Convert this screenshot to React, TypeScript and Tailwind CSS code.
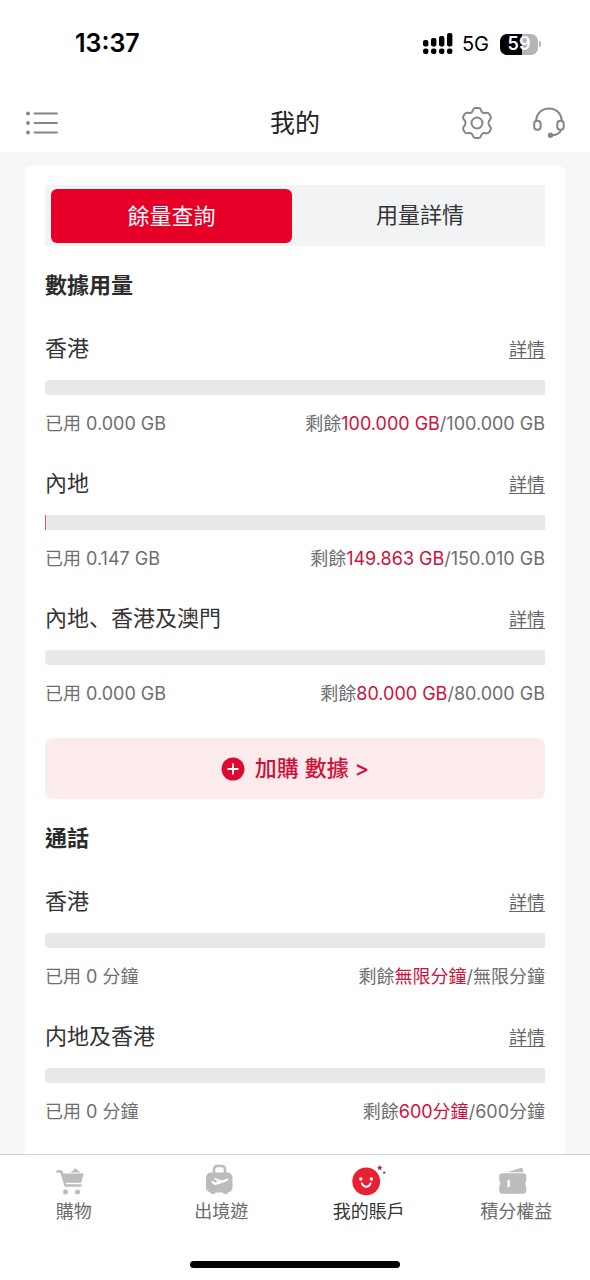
import type { ReactNode } from "react"
import clsx from "clsx"

type Usage = {
  name: string
  used: number
  total: number
  usedText: string
  leftText: string
  totalText: string
}

const dataUsage: Usage[] = [
  { name: "香港", used: 0, total: 100, usedText: "0.000 GB", leftText: "100.000 GB", totalText: "100.000 GB" },
  { name: "內地", used: 0.147, total: 150.01, usedText: "0.147 GB", leftText: "149.863 GB", totalText: "150.010 GB" },
  { name: "內地、香港及澳門", used: 0, total: 80, usedText: "0.000 GB", leftText: "80.000 GB", totalText: "80.000 GB" },
]

const voiceUsage: Usage[] = [
  { name: "香港", used: 0, total: 1, usedText: "0 分鐘", leftText: "無限分鐘", totalText: "無限分鐘" },
  { name: "内地及香港", used: 0, total: 600, usedText: "0 分鐘", leftText: "600分鐘", totalText: "600分鐘" },
]

function StatusBar() {
  return (
    <div className="flex h-[88px] items-center justify-between pl-[75px] pr-[49px] text-black">
      <span className="text-[25px] font-semibold">13:37</span>
      <div className="flex items-center">
        <svg width="30" height="22" viewBox="0 0 30 22" fill="currentColor" aria-hidden="true">
          <rect x="0" y="7" width="5.400" height="6.500" rx="2" />
          <rect x="8" y="5" width="5.400" height="8.500" rx="2" />
          <rect x="16" y="3" width="5.400" height="10.500" rx="2" />
          <rect x="24" y="0" width="5.400" height="13.500" rx="2" />
          <rect x="0" y="15.500" width="5.400" height="5.500" rx="2.200" />
          <rect x="8" y="15.500" width="5.400" height="5.500" rx="2.200" />
          <rect x="16" y="15.500" width="5.400" height="5.500" rx="2.200" />
          <rect x="24" y="15.500" width="5.400" height="5.500" rx="2.200" />
        </svg>
        <span className="mr-[11px] ml-[9px] text-xl">5G</span>
        <div className="flex h-[21px] w-[38px] items-center justify-center rounded-[7px] bg-linear-to-r from-black from-59% to-[#b5b5b5] to-59% text-lg font-semibold text-white">
          59
        </div>
        <div className="ml-px h-[6px] w-[2px] rounded-r-full bg-[#b5b5b5]" />
      </div>
    </div>
  )
}

function Header() {
  return (
    <header className="grid h-16 grid-cols-[1fr_auto_1fr] items-center px-[25px] pt-[6px] text-[#858585]">
      <button type="button" aria-label="選單" className="justify-self-start">
        <svg width="34" height="24" viewBox="0 0 34 24" fill="none" stroke="currentColor" strokeWidth="1.8" strokeLinecap="round">
          <path d="M9.500 2.500H32M9.500 12H32M9.500 21.500H32" />
          <g fill="currentColor" stroke="none">
            <circle cx="3" cy="2.500" r="1.900" />
            <circle cx="3" cy="12" r="1.900" />
            <circle cx="3" cy="21.500" r="1.900" />
          </g>
        </svg>
      </button>
      <h1 className="text-[25px] leading-8 text-[#222]">我的</h1>
      <div className="flex gap-10 justify-self-end">
        <button type="button" aria-label="設定">
          <svg width="32" height="32" viewBox="-16 -16 32 32" fill="none" stroke="currentColor" strokeWidth="2" strokeLinejoin="round">
            <path d="M-1.500-15H1.500Q3.300-15 3.900-13.200L4.500-11.800Q5.300-9.600 7.600-10L9.500-10.300Q11.400-10.500 12.300-9L13.600-6.700Q14.500-5.200 13.200-3.700L12-2.100Q10.800 0 12 2.100L13.200 3.700Q14.500 5.200 13.600 6.700L12.300 9Q11.400 10.500 9.500 10.300L7.600 10Q5.300 9.600 4.500 11.800L3.900 13.200Q3.300 15 1.500 15H-1.500Q-3.300 15-3.900 13.200L-4.500 11.800Q-5.300 9.600-7.600 10L-9.500 10.300Q-11.400 10.500-12.300 9L-13.600 6.700Q-14.500 5.200-13.200 3.700L-12 2.100Q-10.800 0-12-2.100L-13.200-3.700Q-14.500-5.200-13.600-6.700L-12.300-9Q-11.400-10.500-9.500-10.300L-7.600-10Q-5.300-9.600-4.500-11.800L-3.900-13.200Q-3.300-15-1.500-15Z" />
            <circle r="5.500" />
          </svg>
        </button>
        <button type="button" aria-label="客戶服務">
          <svg width="32" height="32" viewBox="0 0 32 32" fill="none" stroke="currentColor" strokeWidth="2" strokeLinecap="round">
            <path d="M3.200 13.500C3.600 6.300 9 1.500 16 1.500s12.300 4.800 12.700 12" />
            <rect x="1.200" y="13.800" width="6.400" height="9" rx="3" />
            <rect x="24.300" y="13.800" width="6.400" height="9" rx="3" />
            <path d="M28 23c-.8 3-5 5.400-10 5.400" />
            <circle cx="17.500" cy="28.300" r="1.700" fill="currentColor" />
          </svg>
        </button>
      </div>
    </header>
  )
}

function UsageItem({ item }: { item: Usage }) {
  return (
    <div>
      <div className="flex items-end justify-between">
        <h3 className="font-['Inter','Noto_Sans_CJK_SC',sans-serif] text-[22px] leading-8 text-[#333]" lang="zh-Hans">
          {item.name}
        </h3>
        <a href="#" className="text-lg leading-7 text-[#666] underline decoration-1 underline-offset-2">
          詳情
        </a>
      </div>
      <div
        role="progressbar"
        aria-label={item.name}
        aria-valuenow={item.used}
        aria-valuemax={item.total}
        className="mt-4 h-[15px] rounded-l-sm bg-[#e9e9e9]"
      >
        {item.used > 0 && (
          <div className="h-full min-w-px bg-[#e5526a]" style={{ width: `${(item.used / item.total) * 100}%` }} />
        )}
      </div>
      <div className="mt-[15px] flex justify-between text-lg leading-7 text-[#6e6e6e]">
        <span>已用 {item.usedText}</span>
        <span>
          剩餘<span className="text-[#d0103a]">{item.leftText}</span>/{item.totalText}
        </span>
      </div>
    </div>
  )
}

function UsageSection({ title, items }: { title: string; items: Usage[] }) {
  return (
    <section className="mt-[23px]">
      <h2 className="mb-[31px] text-[22px] leading-8 font-bold text-[#2b2b2b]">{title}</h2>
      <div className="flex flex-col gap-[29px]">
        {items.map((item) => (
          <UsageItem key={item.name} item={item} />
        ))}
      </div>
    </section>
  )
}

function NavItem({ label, active, children }: { label: string; active?: boolean; children: ReactNode }) {
  return (
    <a
      href="#"
      className={clsx("flex flex-1 flex-col items-center", active ? "text-[#333]" : "text-[#6b6b6b]")}
      aria-current={active ? "page" : undefined}
    >
      <svg width="36" height="32" viewBox="0 0 36 32" fill="#bcbcbc" aria-hidden="true">
        {children}
      </svg>
      <span className="mt-[2px] text-lg leading-7">{label}</span>
    </a>
  )
}

function BottomNav() {
  return (
    <nav className="sticky bottom-0 border-t border-[#cfcfcf] bg-white">
      <div className="flex pt-[9px]">
        <NavItem label="購物">
          <path d="M1.500 7.500h3.800l4.200 14h15" fill="none" stroke="#bcbcbc" strokeWidth="2.600" strokeLinecap="round" strokeLinejoin="round" />
          <path d="M6.500 9.500h21.200l-2.500 9.300H9.200z" />
          <path d="M14.500 8.500l5-4.200 5 4.200z" />
          <circle cx="9.500" cy="28" r="2.500" />
          <circle cx="21.500" cy="28" r="2.500" />
        </NavItem>
        <NavItem label="出境遊">
          <path d="M11 10V5a3 3 0 013-3h5a3 3 0 013 3v5" fill="none" stroke="#bcbcbc" strokeWidth="2.600" />
          <rect x="3" y="8.500" width="26.500" height="20" rx="5" />
          <rect x="7.500" y="26" width="5" height="4" rx="1.500" />
          <rect x="20" y="26" width="5" height="4" rx="1.500" />
          <path d="M8 17.300l1.600-.4 2.600 1.600 2.700-.9-4.400-2.800 2.200-.6 6.300 2.200 4.200-1.400c2-.6 3 .2 1.600 1.300-3 1.900-9 4-12.500 4.600-1.700.2-3-1.400-4.300-3.600z" fill="#fff" />
        </NavItem>
        <NavItem label="我的賬戶" active>
          <circle cx="15.200" cy="17.300" r="13.900" fill="#e8202f" />
          <circle cx="9.800" cy="15" r="1.700" fill="#fff" />
          <circle cx="20.400" cy="15" r="1.700" fill="#fff" />
          <path d="M10.800 19.300c2 4.500 7 4.500 8.800 0" fill="none" stroke="#fff" strokeWidth="1.900" strokeLinecap="round" />
          <path d="M28.700 1l.9 1.700 1.800.3-1.300 1.300.3 1.900-1.700-.9-1.700.9.300-1.900L26 3l1.800-.3z" fill="#b5274b" />
          <circle cx="33.200" cy="8.600" r="1.200" fill="#b5274b" />
        </NavItem>
        <NavItem label="積分權益">
          <path d="M9 8.300l13.500-4.200c1.300-.4 2.100.1 2.300 1.200l.6 3z" />
          <path d="M4.500 9.300H25a3.300 3.300 0 013.300 3.300v3.700c-1.200 1.500-1.200 4.700 0 6.200v4a3.300 3.300 0 01-3.300 3.300H4.500a3.300 3.300 0 01-3.300-3.300v-4c1.200-1.500 1.200-4.700 0-6.200v-3.700a3.300 3.300 0 013.300-3.300z" />
          <rect x="9.500" y="15.800" width="2.400" height="7.500" rx="1" fill="#fff" />
        </NavItem>
      </div>
      <div className="mx-auto mt-[35px] mb-[12px] h-[7px] w-[210px] rounded-full bg-black" />
    </nav>
  )
}

export default function App() {
  return (
    <div className="flex min-h-screen flex-col bg-white font-['Inter','Noto_Sans_CJK_TC',sans-serif]" lang="zh-HK">
      <StatusBar />
      <Header />
      <main className="flex flex-1 flex-col bg-[#f6f7f9] px-[25px] pt-[14px]">
        <div className="flex-1 rounded-t-md bg-white px-5 pt-[19px]">
          <div role="tablist" className="flex h-[61px] bg-[#f2f3f5] text-[22px]">
            <div className="flex w-1/2 pt-1 pr-[3px] pb-[3px] pl-[6px]">
              <button type="button" role="tab" aria-selected="true" className="flex-1 rounded-md bg-[#e60028] text-white">
                餘量查詢
              </button>
            </div>
            <button type="button" role="tab" aria-selected="false" className="w-1/2 text-[#333]">
              用量詳情
            </button>
          </div>

          <UsageSection title="數據用量" items={dataUsage} />

          <button
            type="button"
            className="mt-[30px] flex h-[61px] w-full items-center justify-center rounded-lg bg-[#fcebec] text-[22px] font-medium text-[#d0103a]"
          >
            <svg className="mr-[10px]" width="24" height="24" viewBox="0 0 24 24" aria-hidden="true">
              <circle cx="12" cy="12" r="11.500" fill="#dc0a32" />
              <path d="M12 6.500v11M6.500 12h11" stroke="#fff" strokeWidth="1.800" />
            </svg>
            加購 數據 &gt;
          </button>

          <UsageSection title="通話" items={voiceUsage} />
        </div>
      </main>
      <BottomNav />
    </div>
  )
}
